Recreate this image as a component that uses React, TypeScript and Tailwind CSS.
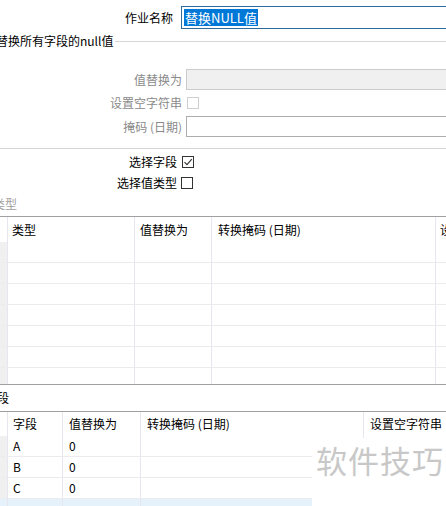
import React from "react";

const font = { fontFamily: '"Noto Sans CJK SC", "Noto Sans", sans-serif' };

function Check({ checked, disabled }: { checked?: boolean; disabled?: boolean }) {
  return (
    <div
      className={`w-[12px] h-[12px] border bg-white flex items-center justify-center ${
        disabled ? "border-[#cfcfcf]" : "border-[#333333]"
      }`}
    >
      {checked && (
        <svg width="10" height="10" viewBox="0 0 10 10">
          <path d="M1.5 5.2 L4 7.7 L8.8 2.2" fill="none" stroke="#333" strokeWidth="1.1" />
        </svg>
      )}
    </div>
  );
}

const typeRows = Array.from({ length: 7 });
const fieldRows = [
  { f: "A", v: "0" },
  { f: "B", v: "0" },
  { f: "C", v: "0" },
];

export default function App() {
  return (
    <div
      className="relative w-[446px] h-[506px] overflow-hidden bg-white text-[12px] leading-none text-black"
      style={font}
    >
      {/* job name */}
      <div className="flex items-center mt-[6px] h-[23px]">
        <div className="w-[173px] text-right">作业名称</div>
        <div className="ml-[8px] -mr-[6px] flex-1 h-[23px] border border-[#2f6c9e] flex items-center pl-[2px]">
          <span className="bg-[#0078d7] text-white px-[1px] h-[17px] flex items-center text-[13px]">替换NULL值</span>
        </div>
      </div>

      {/* group legend */}
      <div className="flex items-center mt-[6px] h-[12px]">
        <span className="-ml-[4px] whitespace-nowrap">替换所有字段的null值</span>
        <div className="flex-1 ml-[2px] h-px bg-[#d5d5d5]" />
      </div>

      <div className="flex items-center mt-[22px] h-[21px]">
        <div className="w-[182px] text-right text-[#8a8a8a]">值替换为</div>
        <div className="ml-[4px] -mr-[6px] flex-1 h-[21px] border border-[#cccccc] bg-[#f0f0f0]" />
      </div>
      <div className="flex items-center mt-[7px] h-[12px]">
        <div className="w-[182px] text-right text-[#8a8a8a]">设置空字符串</div>
        <div className="ml-[5px]">
          <Check disabled />
        </div>
      </div>
      <div className="flex items-center mt-[7px] h-[21px]">
        <div className="w-[182px] text-right text-[#8a8a8a]">掩码 (日期)</div>
        <div className="ml-[4px] -mr-[6px] flex-1 h-[21px] border border-[#adadad] bg-white" />
      </div>
      <div className="mt-[11px] h-px bg-[#d5d5d5]" />

      <div className="flex items-center mt-[7px] h-[12px]">
        <div className="w-[177px] text-right">选择字段</div>
        <div className="ml-[5px]">
          <Check checked />
        </div>
      </div>
      <div className="flex items-center mt-[9px] h-[12px]">
        <div className="w-[177px] text-right">选择值类型</div>
        <div className="ml-[4px]">
          <Check />
        </div>
      </div>
      <div className="mt-[8px] h-[14px] flex items-center">
        <span className="-ml-[7px] text-[#a0a0a0]">类型</span>
      </div>

      {/* type table */}
      <div className="mt-[5px] h-[169px] border-y border-[#a0a0a0] overflow-hidden">
        <div className="flex h-[25px] items-center">
          <div className="w-[8px] h-full border-r border-[#e6e7ee]" />
          <div className="w-[127px] h-full border-r border-[#e6e7ee] pl-[4px] flex items-center">类型</div>
          <div className="w-[77px] h-full border-r border-[#e6e7ee] pl-[5px] flex items-center">值替换为</div>
          <div className="w-[224px] h-full border-r border-[#e6e7ee] pl-[6px] flex items-center">转换掩码 (日期)</div>
          <div className="flex-1 h-full pl-[4px] flex items-center whitespace-nowrap overflow-hidden">设置空字符串</div>
        </div>
        {typeRows.map((_, i) => (
          <div key={i} className="flex h-[21px] border-b border-[#ececf0]">
            <div className="w-[8px] h-full bg-[#f0f0f0] border-r border-[#e6e7ee]" />
            <div className="w-[127px] h-full border-r border-[#e6e7ee]" />
            <div className="w-[77px] h-full border-r border-[#e6e7ee]" />
            <div className="w-[224px] h-full border-r border-[#e6e7ee]" />
            <div className="flex-1 h-full" />
          </div>
        ))}
      </div>

      <div className="mt-[3px] h-[20px] flex items-center">
        <span className="-ml-[15px]">字段</span>
      </div>

      {/* field table */}
      <div className="mt-[3px] border-t border-[#a0a0a0]">
        <div className="flex h-[24px]">
          <div className="w-[8px] h-full border-r border-[#e6e7ee]" />
          <div className="w-[55px] h-full border-r border-[#e6e7ee] pl-[5px] flex items-center">字段</div>
          <div className="w-[78px] h-full border-r border-[#e6e7ee] pl-[6px] flex items-center">值替换为</div>
          <div className="w-[223px] h-full border-r border-[#e6e7ee] pl-[6px] flex items-center">转换掩码 (日期)</div>
          <div className="flex-1 h-full pl-[6px] flex items-center whitespace-nowrap overflow-hidden">设置空字符串</div>
        </div>
        {fieldRows.map((r) => (
          <div key={r.f} className="flex h-[21px] border-b border-[#ececf0]">
            <div className="w-[8px] h-full bg-[#f0f0f0] border-r border-[#e6e7ee]" />
            <div className="w-[55px] h-full border-r border-[#e6e7ee] pl-[5px] flex items-center">{r.f}</div>
            <div className="w-[78px] h-full border-r border-[#e6e7ee] pl-[6px] flex items-center">{r.v}</div>
            <div className="w-[223px] h-full border-r border-[#e6e7ee]" />
            <div className="flex-1 h-full" />
          </div>
        ))}
        <div className="flex h-[21px] bg-[#e5f1fb]">
          <div className="w-[8px] h-full border-r border-[#e6e7ee]" />
          <div className="w-[55px] h-full border-r border-[#e6e7ee] pl-[5px] pt-[8px]">NULL</div>
          <div className="w-[78px] h-full border-r border-[#e6e7ee]" />
          <div className="flex-1 h-full" />
        </div>
      </div>

      {/* watermark */}
      <div className="absolute left-[312px] top-[438px] right-0 bottom-0 bg-white flex items-start">
        <span className="mt-[6px] ml-[4px] text-[31px] tracking-[1px] text-[#c8c8c8] whitespace-nowrap">软件技巧</span>
      </div>
    </div>
  );
}
